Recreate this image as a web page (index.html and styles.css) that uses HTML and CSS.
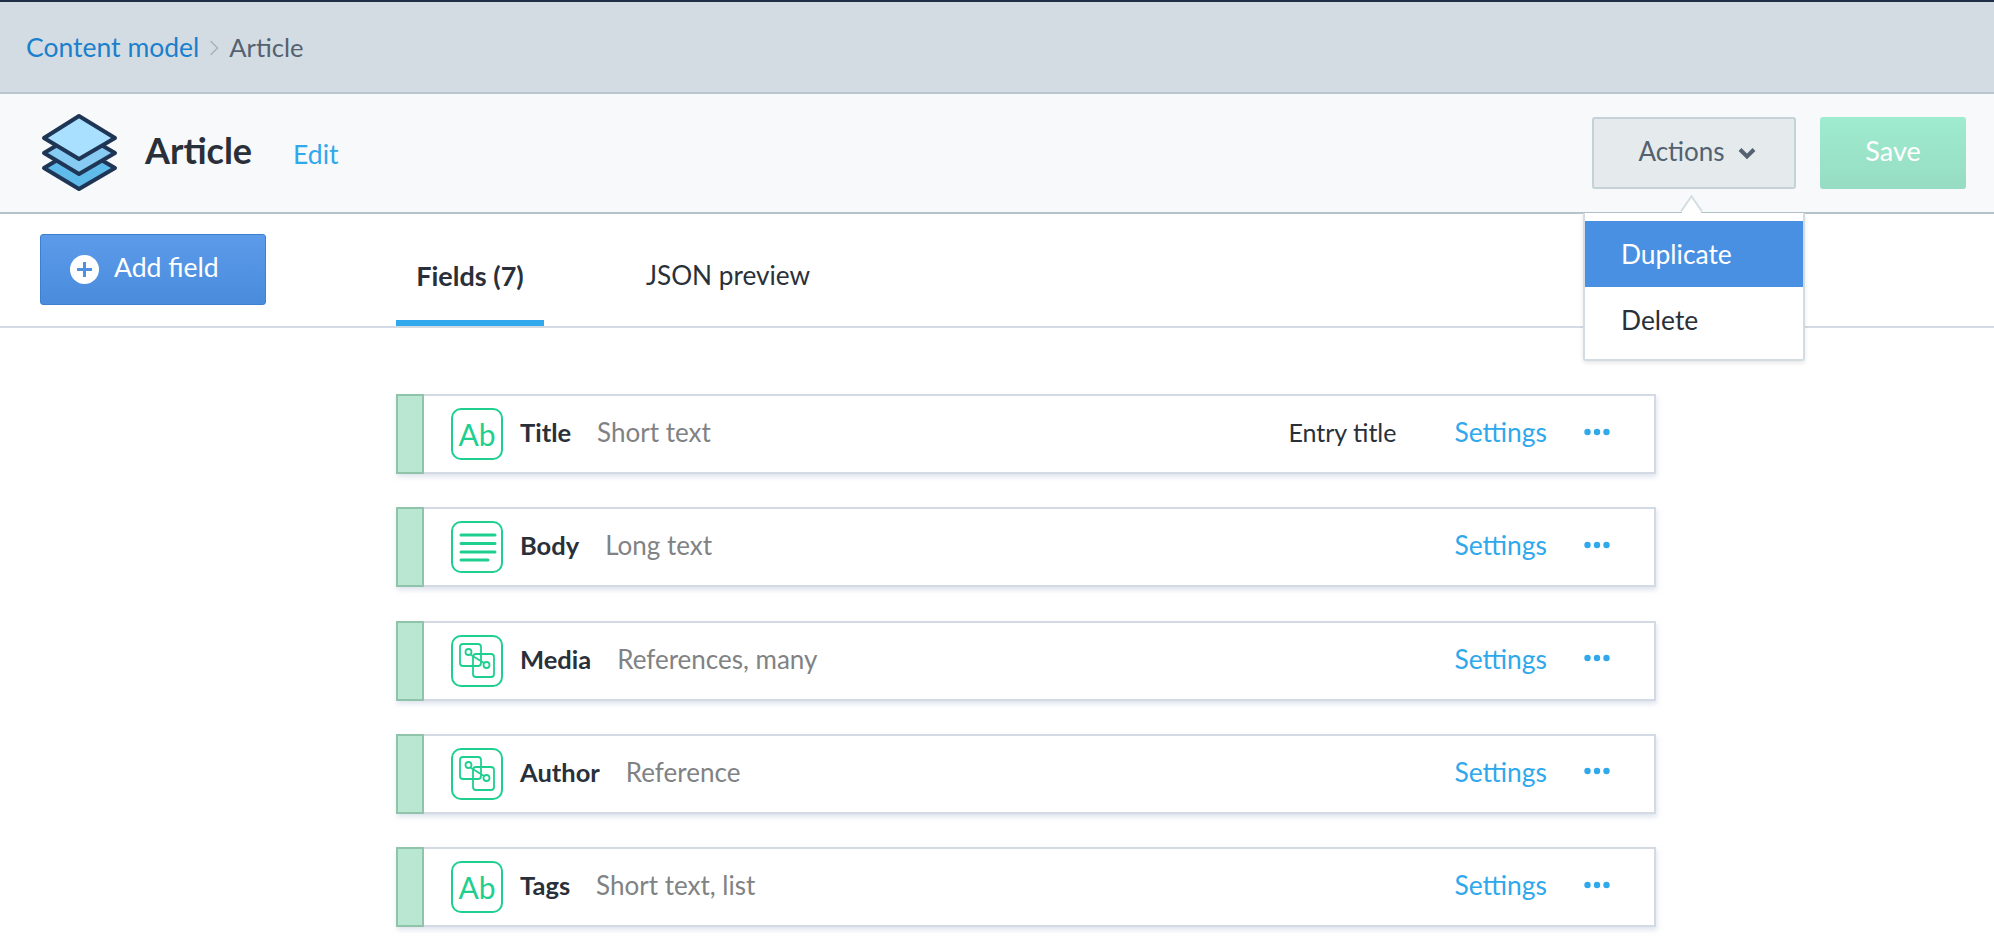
FILE: index.html
```html
<!DOCTYPE html>
<html lang="en">
<head>
    <meta charset="UTF-8">
    <meta name="viewport" content="width=device-width, initial-scale=1.0">
    <title>Article - Content model</title>
    <link rel="stylesheet" href="styles.css">
</head>
<body>

    <nav class="breadcrumb">
        <a class="crumb-link">Content model</a>
        <svg class="crumb-sep" width="10" height="18" viewBox="0 0 10 18"><path d="M1.5 2l7 7-7 7" fill="none" stroke="#a9b6bf" stroke-width="1.6"/></svg>
        <span class="crumb-current">Article</span>
    </nav>

    <header class="page-head">
        <svg class="layers" width="78" height="80" viewBox="0 0 78 80">
            <g stroke="#1f3555" stroke-width="4" stroke-linejoin="round">
                <path d="M39 34 75 55 39 76 4 55z" fill="#5fbbea"/>
                <path d="M39 19 75 40 39 61 4 40z" fill="#87cbf2"/>
                <path d="M39 3 75 25 39 46 4 25z" fill="#a9e0ff"/>
            </g>
        </svg>
        <h1 class="page-title">Article</h1>
        <a class="edit-link">Edit</a>
        <div class="head-actions">
            <button class="btn-actions"><span class="btn-label">Actions</span>
                <svg width="18" height="13" viewBox="0 0 18 13"><path d="M2 2.500l7 7 7-7" fill="none" stroke="#536171" stroke-width="4"/></svg>
            </button>
            <button class="btn-save"><span class="btn-label">Save</span></button>
        </div>
    </header>

    <div class="toolbar">
        <button class="btn-add">
            <svg width="29" height="29" viewBox="0 0 29 29"><circle cx="14.5" cy="14.5" r="14.5" fill="#fff"/><path d="M14.5 7v15M7 14.5h15" stroke="#4f90e0" stroke-width="3"/></svg>
            <span class="btn-label">Add field</span>
        </button>
        <div class="tabs">
            <a class="tab tab-active">Fields (7)</a>
            <a class="tab">JSON preview</a>
        </div>
    </div>

    <!-- Actions dropdown -->
    <div class="dropdown">
        <span class="dropdown-arrow"></span>
        <div class="dropdown-item dropdown-item-active">Duplicate</div>
        <div class="dropdown-item">Delete</div>
    </div>

    <main class="fields">
        <div class="field">
            <span class="handle"></span>
            <span class="field-icon icon-text">Ab</span>
            <span class="field-name">Title</span>
            <span class="field-type">Short text</span>
            <span class="field-flag">Entry title</span>
            <a class="field-settings">Settings</a>
            <svg class="field-more" width="26" height="8" viewBox="0 0 26 8"><circle cx="3.5" cy="4" r="3.2"/><circle cx="13" cy="4" r="3.2"/><circle cx="22.5" cy="4" r="3.2"/></svg>
        </div>
        <div class="field">
            <span class="handle"></span>
            <span class="field-icon">
                <svg width="52" height="52" viewBox="0 0 52 52"><path d="M10 14h34M10 22.500h34M10 31h34M10 39h27" stroke="#1fcf8f" stroke-width="3" stroke-linecap="round"/></svg>
            </span>
            <span class="field-name">Body</span>
            <span class="field-type">Long text</span>
            <a class="field-settings">Settings</a>
            <svg class="field-more" width="26" height="8" viewBox="0 0 26 8"><circle cx="3.5" cy="4" r="3.2"/><circle cx="13" cy="4" r="3.2"/><circle cx="22.5" cy="4" r="3.2"/></svg>
        </div>
        <div class="field">
            <span class="handle"></span>
            <span class="field-icon">
                <svg width="52" height="52" viewBox="0 0 52 52"><g fill="none" stroke="#1fcf8f" stroke-width="1.8"><rect x="9" y="9" width="21" height="22" rx="3"/><rect x="22" y="19" width="21" height="23" rx="3"/><path d="M20 20l13 8"/><circle cx="17.500" cy="17" r="3"/><circle cx="35.500" cy="30" r="3"/></g></svg>
            </span>
            <span class="field-name">Media</span>
            <span class="field-type">References, many</span>
            <a class="field-settings">Settings</a>
            <svg class="field-more" width="26" height="8" viewBox="0 0 26 8"><circle cx="3.5" cy="4" r="3.2"/><circle cx="13" cy="4" r="3.2"/><circle cx="22.5" cy="4" r="3.2"/></svg>
        </div>
        <div class="field">
            <span class="handle"></span>
            <span class="field-icon">
                <svg width="52" height="52" viewBox="0 0 52 52"><g fill="none" stroke="#1fcf8f" stroke-width="1.8"><rect x="9" y="9" width="21" height="22" rx="3"/><rect x="22" y="19" width="21" height="23" rx="3"/><path d="M20 20l13 8"/><circle cx="17.500" cy="17" r="3"/><circle cx="35.500" cy="30" r="3"/></g></svg>
            </span>
            <span class="field-name">Author</span>
            <span class="field-type">Reference</span>
            <a class="field-settings">Settings</a>
            <svg class="field-more" width="26" height="8" viewBox="0 0 26 8"><circle cx="3.5" cy="4" r="3.2"/><circle cx="13" cy="4" r="3.2"/><circle cx="22.5" cy="4" r="3.2"/></svg>
        </div>
        <div class="field">
            <span class="handle"></span>
            <span class="field-icon icon-text">Ab</span>
            <span class="field-name">Tags</span>
            <span class="field-type">Short text, list</span>
            <a class="field-settings">Settings</a>
            <svg class="field-more" width="26" height="8" viewBox="0 0 26 8"><circle cx="3.5" cy="4" r="3.2"/><circle cx="13" cy="4" r="3.2"/><circle cx="22.5" cy="4" r="3.2"/></svg>
        </div>
    </main>

</body>
</html>
```

FILE: styles.css
```css
body {
    margin: 0;
    height: 948px;
    overflow: hidden;
    position: relative;
    background: #fff;
    font-family: 'Lato', 'Open Sans', sans-serif;
    font-size: 26px;
    color: #2a3039;
}

button {
    font-family: inherit;
    font-size: 26px;
    cursor: pointer;
}

.btn-label {
    margin-bottom: 5px;
}

/* Breadcrumb bar */
.breadcrumb {
    display: flex;
    align-items: center;
    height: 90px;
    padding-left: 26px;
    background: #d3dce3;
    border-top: 2px solid #1f2f47;
    border-bottom: 2px solid #b9c6cd;
    font-size: 26.5px;
}

.crumb-link {
    color: #1a80cc;
}

.crumb-sep {
    margin: 2px 10px 0;
}

.crumb-current {
    font-size: 25.6px;
    color: #536171;
}

/* Title bar */
.page-head {
    display: flex;
    align-items: center;
    height: 118px;
    padding: 0 28px 0 40px;
    background: #f7f9fa;
    border-bottom: 2px solid #b4c3ca;
}

.layers {
    margin-right: 27px;
}

.page-title {
    margin: 0 41px 7px 0;
    font-size: 36px;
    font-weight: 700;
    color: #2a3039;
}

.edit-link {
    margin-top: 1px;
    font-size: 26.5px;
    color: #2fa8ec;
}

.head-actions {
    display: flex;
    gap: 24px;
    margin-left: auto;
}

.btn-actions {
    display: flex;
    align-items: center;
    justify-content: center;
    gap: 13px;
    width: 204px;
    height: 72px;
    padding: 0 0 0 6px;
    background: #e5eaed;
    border: 2px solid #c5d2d8;
    border-radius: 3px;
    color: #536171;
}

.btn-save {
    display: flex;
    align-items: center;
    justify-content: center;
    width: 146px;
    height: 72px;
    background: linear-gradient(#9fecd0, #96dcc3);
    border: none;
    border-radius: 3px;
    color: #fff;
    font-size: 27px;
}

/* Add field + tabs */
.toolbar {
    display: flex;
    height: 112px;
    padding-left: 40px;
    border-bottom: 2px solid #d3dae4;
}

.btn-add {
    display: flex;
    align-items: center;
    gap: 15px;
    width: 226px;
    height: 71px;
    margin-top: 20px;
    padding: 0 0 0 29px;
    background: linear-gradient(#5c9bea, #4a8bdc);
    border: 1px solid #3c80cf;
    border-radius: 3px;
    color: #fff;
    font-size: 26.6px;
}

.tabs {
    display: flex;
    margin-left: 130px;
}

.tab {
    display: flex;
    align-items: center;
    justify-content: center;
    white-space: nowrap;
    height: 112px;
    padding-top: 10px;
    box-sizing: border-box;
    font-size: 26.2px;
    margin-right: 110px;
    width: 148px;
}

.tab-active {
    padding-top: 16px;
    font-size: 27px;
    font-weight: 700;
    border-bottom: 6px solid #2fa8ec;
}

/* Actions dropdown */
.dropdown {
    position: absolute;
    left: 1583px;
    top: 213px;
    width: 218px;
    height: 138px;
    padding-top: 8px;
    background: #fff;
    border: 2px solid #d3dce0;
    border-top: none;
    border-radius: 0 0 3px 3px;
    box-shadow: 0 2px 4px rgba(0, 0, 0, 0.1);
}

.dropdown-arrow {
    position: absolute;
    left: 97px;
    top: -12px;
    width: 17px;
    height: 17px;
    background: #fff;
    border-left: 2px solid #d3dce0;
    border-top: 2px solid #d3dce0;
    transform: rotate(45deg) skew(10deg, 10deg);
}

.dropdown-item {
    position: relative;
    display: flex;
    align-items: center;
    height: 66px;
    padding-left: 36px;
    font-size: 26.4px;
}

.dropdown-item-active {
    background: #4a90e2;
    color: #fff;
}

/* Field rows */
.fields {
    display: flex;
    flex-direction: column;
    gap: 33.3px;
    width: 1260px;
    margin: 66px 0 0 396px;
}

.field {
    display: flex;
    align-items: center;
    height: 80px;
    box-sizing: border-box;
    background: #fff;
    border: 2px solid #d3dae4;
    border-left: none;
    box-shadow: 1px 3px 5px rgba(160, 175, 200, 0.35);
}

.handle {
    align-self: stretch;
    width: 24px;
    margin: -2px 0;
    background: #b9e7d1;
    border: 2px solid #8fc4aa;
}

.field-icon {
    display: flex;
    align-items: center;
    justify-content: center;
    width: 52px;
    height: 52px;
    box-sizing: border-box;
    margin: 0 17px 0 27px;
    flex-shrink: 0;
    border: 2px solid #1fcf8f;
    border-radius: 10px;
    color: #1fcf8f;
    position: relative;
}

.field-icon svg {
    position: absolute;
    left: -2px;
    top: -2px;
}

.icon-text {
    font-size: 30px;
}

.field-name {
    font-size: 25.5px;
    font-weight: 700;
    margin: 0 26px 4px 0;
}

.field-type {
    margin-bottom: 4px;
    color: #808284;
}

.field-flag {
    margin: 0 0 4px auto;
    font-size: 25px;
}

.field-settings {
    margin: 0 0 4px 58px;
    font-size: 26.4px;
    color: #2fa8ec;
}

.field-type + .field-settings {
    margin-left: auto;
}

.field-more {
    margin: -5px 44px 0 37px;
    fill: #2fa8ec;
}
```
